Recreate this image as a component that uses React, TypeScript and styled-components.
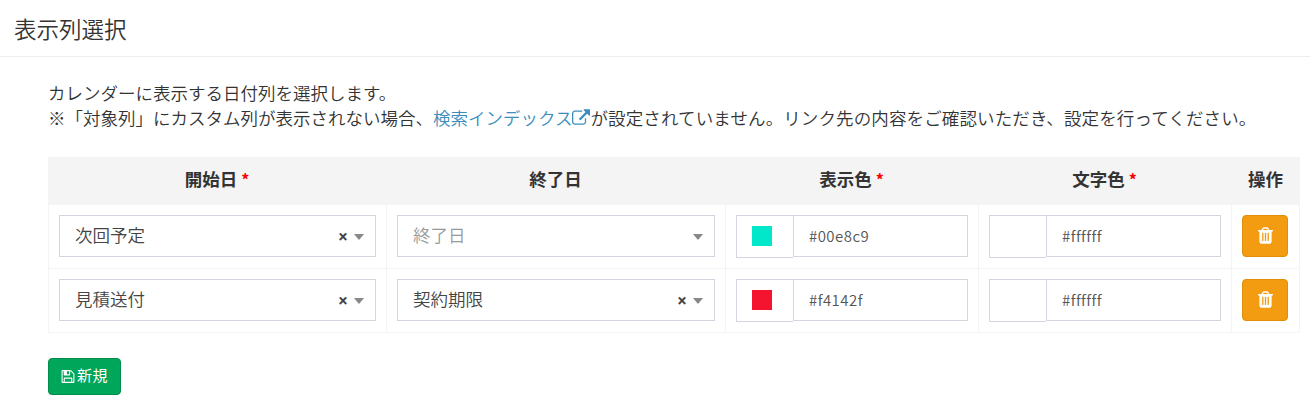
import React from 'react';
import styled, { createGlobalStyle } from 'styled-components';

const GlobalStyle = createGlobalStyle`
  * { box-sizing: border-box; }
  body {
    margin: 0;
    background: #fff;
    color: #333;
    font-family: 'Noto Sans CJK JP', sans-serif;
    font-size: 17.5px;
    font-weight: 350;
    line-height: 25px;
  }
  button, input { font: inherit; }
`;

const Page = styled.section`
  height: 400px;
  overflow: hidden;
`;

const Header = styled.header`
  height: 57px;
  padding: 16px 14px 0;
  border-bottom: 1px solid #ededed;
`;

const Title = styled.h3`
  margin: 0;
  font-size: 22.5px;
  font-weight: 350;
  line-height: 25px;
`;

const Body = styled.div`
  padding: 23px 10px 0 48px;
`;

const Description = styled.p`
  margin: 0 0 27px;
  white-space: nowrap;
`;

const Notice = styled.span`
  letter-spacing: 0.12px;
`;

const Link = styled.a`
  color: #3c8dbc;
  text-decoration: none;
`;

const Glyph = styled.svg<{ $w: number; $h: number; $drop?: number }>`
  width: ${(p) => p.$w}px;
  height: ${(p) => p.$h}px;
  fill: currentColor;
  vertical-align: ${(p) => -(p.$drop ?? 0)}px;
  flex: none;
`;

const Table = styled.table`
  width: 1252px;
  table-layout: fixed;
  border-collapse: separate;
  border-spacing: 0;
`;

const HeadCell = styled.th`
  height: 48px;
  padding: 0 0 5px;
  background: #f4f4f4;
  font-weight: 700;
  text-align: center;
  vertical-align: middle;
`;

const Required = styled.span`
  margin-left: 4px;
  color: #f00;
  font-size: 16px;
`;

const Cell = styled.td`
  height: 64px;
  padding: 10px;
  border-left: 1px solid #f4f4f4;
  border-bottom: 1px solid #f4f4f4;
  vertical-align: top;
  &:last-child { border-right: 1px solid #f4f4f4; }
`;

const SelectBox = styled.div`
  display: flex;
  align-items: center;
  height: 42px;
  padding: 0 11px 0 15px;
  border: 1px solid #d2d6de;
`;

const SelectText = styled.span<{ $placeholder: boolean }>`
  flex: 1;
  padding-bottom: 3px;
  color: ${(p) => (p.$placeholder ? '#999' : '#444')};
`;

const Clear = styled.span`
  margin-right: 6px;
  color: #444;
  font-family: 'Noto Sans', sans-serif;
  font-size: 17.5px;
  font-weight: 700;
`;

const Caret = styled.span`
  border: 5px solid transparent;
  border-top: 6px solid #888;
  border-bottom: 0;
  margin-top: 2px;
`;

const ColorGroup = styled.div`
  display: flex;
  align-items: flex-start;
`;

const Addon = styled.div`
  display: flex;
  width: 57px;
  height: 43px;
  padding: 10px 15px;
  border: 1px solid #d2d6de;
  border-right: 0;
`;

const Swatch = styled.i<{ $color: string }>`
  width: 20px;
  height: 20px;
  background: ${(p) => p.$color};
`;

const ColorInput = styled.input`
  flex: 1;
  min-width: 0;
  height: 42px;
  padding: 0 15px 2px;
  border: 1px solid #d2d6de;
  border-radius: 0;
  background: #fff;
  color: #555;
  font-size: 15px;
  letter-spacing: 0.45px;
`;

const Button = styled.button<{ $bg: string; $edge: string; $w: number; $h: number }>`
  display: flex;
  align-items: center;
  justify-content: center;
  width: ${(p) => p.$w}px;
  height: ${(p) => p.$h}px;
  padding: 0 0 1px;
  border: 1px solid ${(p) => p.$edge};
  border-radius: 4px;
  background: ${(p) => p.$bg};
  color: #fff;
  font-size: 15px;
  line-height: 22px;
`;

const ButtonLabel = styled.span`
  margin-left: 2px;
  padding-bottom: 2px;
  font-weight: 400;
  letter-spacing: 0.4px;
`;

const Actions = styled.div`
  margin-top: 25px;
`;

const ExternalLinkIcon = () => (
  <Glyph $w={18} $h={18.5} $drop={2.5} viewBox="0 0 1792 1792">
    <path d="M1408 928v320q0 119-84.5 203.5t-203.5 84.5h-832q-119 0-203.5-84.5t-84.5-203.5v-832q0-119 84.5-203.5t203.5-84.5h704q14 0 23 9t9 23v64q0 14-9 23t-23 9h-704q-66 0-113 47t-47 113v832q0 66 47 113t113 47h832q66 0 113-47t47-113v-320q0-14 9-23t23-9h64q14 0 23 9t9 23zm384-864v512q0 26-19 45t-45 19-45-19l-176-176-652 652q-10 10-23 10t-23-10l-114-114q-10-10-10-23t10-23l652-652-176-176q-19-19-19-45t19-45 45-19h512q26 0 45 19t19 45z" />
  </Glyph>
);

const TrashIcon = () => (
  <Glyph $w={15} $h={19} viewBox="192 0 1408 1792">
    <path d="M704 1376v-704q0-14-9-23t-23-9h-64q-14 0-23 9t-9 23v704q0 14 9 23t23 9h64q14 0 23-9t9-23zm256 0v-704q0-14-9-23t-23-9h-64q-14 0-23 9t-9 23v704q0 14 9 23t23 9h64q14 0 23-9t9-23zm256 0v-704q0-14-9-23t-23-9h-64q-14 0-23 9t-9 23v704q0 14 9 23t23 9h64q14 0 23-9t9-23zm-544-992h448l-48-117q-7-9-17-11h-317q-10 2-17 11zm928 32v64q0 14-9 23t-23 9h-96v948q0 83-47 143.5t-113 60.5h-832q-66 0-113-58.5t-47-141.5v-952h-96q-14 0-23-9t-9-23v-64q0-14 9-23t23-9h309l70-167q15-37 54-63t79-26h320q40 0 79 26t54 63l70 167h309q14 0 23 9t9 23z" />
  </Glyph>
);

const SaveIcon = () => (
  <Glyph $w={14} $h={15} viewBox="64 0 1664 1792">
    <path d="M512 1536h768v-384h-768v384zm896 0h128v-896q0-14-10-38.5t-20-34.5l-281-281q-10-10-34-20t-39-10v416q0 40-28 68t-68 28h-576q-40 0-68-28t-28-68v-416h-128v1280h128v-416q0-40 28-68t68-28h832q40 0 68 28t28 68v416zm-384-928v-320q0-13-9.5-22.5t-22.5-9.5h-192q-13 0-22.5 9.5t-9.5 22.5v320q0 13 9.5 22.5t22.5 9.5h192q13 0 22.5-9.5t9.5-22.5zm640 32v928q0 40-28 68t-68 28h-1344q-40 0-68-28t-28-68v-1344q0-40 28-68t68-28h928q40 0 88 20t76 48l280 280q28 28 48 76t20 88z" />
  </Glyph>
);

const columns = [
  { label: '開始日', required: true, width: 338 },
  { label: '終了日', required: false, width: 339 },
  { label: '表示色', required: true, width: 253 },
  { label: '文字色', required: true, width: 253 },
  { label: '操作', required: false, width: 69 },
];

const rows = [
  { start: '次回予定', end: '', color: '#00e8c9', text: '#ffffff' },
  { start: '見積送付', end: '契約期限', color: '#f4142f', text: '#ffffff' },
];

const Select = ({ value, placeholder }: { value: string; placeholder: string }) => (
  <SelectBox>
    <SelectText $placeholder={!value}>{value || placeholder}</SelectText>
    {value && <Clear>×</Clear>}
    <Caret />
  </SelectBox>
);

const ColorField = ({ value }: { value: string }) => (
  <ColorGroup>
    <Addon>
      <Swatch $color={value} />
    </Addon>
    <ColorInput defaultValue={value} spellCheck={false} />
  </ColorGroup>
);

export default function App() {
  return (
    <Page>
      <GlobalStyle />
      <Header>
        <Title>表示列選択</Title>
      </Header>
      <Body>
        <Description>
          カレンダーに表示する日付列を選択します。
          <br />
          ※「対象列」にカスタム列が表示されない場合、
          <Link>
            検索インデックス
            <ExternalLinkIcon />
          </Link>
          <Notice>が設定されていません。リンク先の内容をご確認いただき、設定を行ってください。</Notice>
        </Description>
        <Table>
          <colgroup>
            {columns.map((c) => (
              <col key={c.label} width={c.width} />
            ))}
          </colgroup>
          <thead>
            <tr>
              {columns.map((c) => (
                <HeadCell key={c.label}>
                  {c.label}
                  {c.required && <Required>*</Required>}
                </HeadCell>
              ))}
            </tr>
          </thead>
          <tbody>
            {rows.map((r) => (
              <tr key={r.start}>
                <Cell><Select value={r.start} placeholder="開始日" /></Cell>
                <Cell><Select value={r.end} placeholder="終了日" /></Cell>
                <Cell><ColorField value={r.color} /></Cell>
                <Cell><ColorField value={r.text} /></Cell>
                <Cell>
                  <Button $bg="#f39c12" $edge="#e08e0b" $w={46} $h={42} aria-label="削除">
                    <TrashIcon />
                  </Button>
                </Cell>
              </tr>
            ))}
          </tbody>
        </Table>
        <Actions>
          <Button $bg="#00a65a" $edge="#008d4c" $w={73} $h={37}>
            <SaveIcon />
            <ButtonLabel>新規</ButtonLabel>
          </Button>
        </Actions>
      </Body>
    </Page>
  );
}
